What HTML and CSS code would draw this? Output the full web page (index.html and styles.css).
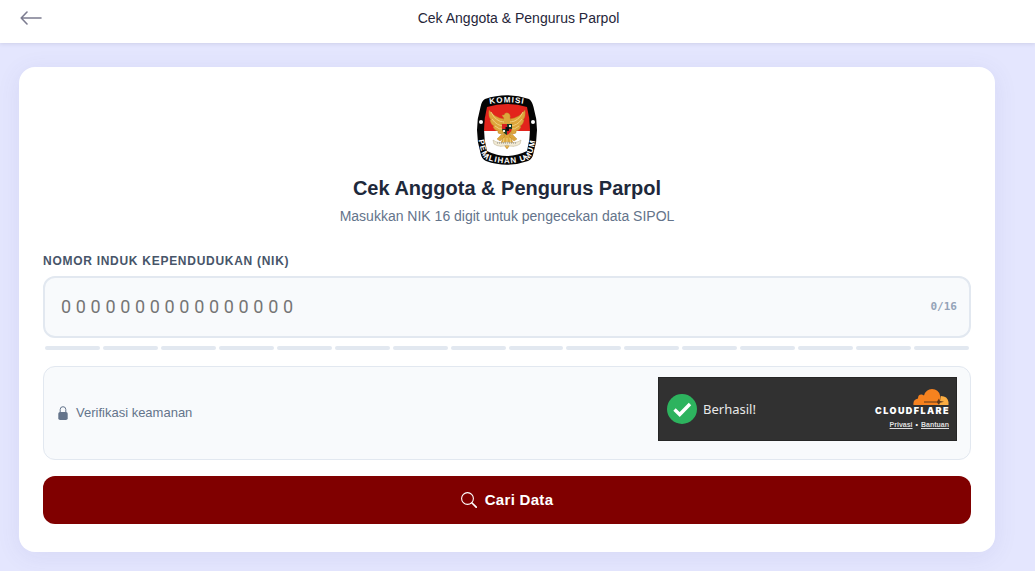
FILE: index.html
```html
<!DOCTYPE html>
<html lang="id">
<head>
<meta charset="utf-8">
<meta name="viewport" content="width=device-width, initial-scale=1">
<title>Cek Anggota &amp; Pengurus Parpol</title>
<link rel="stylesheet" href="styles.css">
</head>
<body>
<header class="topbar">
  <a class="back" href="#" aria-label="Kembali">
    <svg width="22" height="14" viewBox="0 0 22 14" fill="none" stroke="currentColor" stroke-width="1.6" stroke-linecap="round" stroke-linejoin="round"><path d="M21 7H1.2M7 1 1.2 7 7 13"/></svg>
  </a>
  <div class="topbar-title">Cek Anggota &amp; Pengurus Parpol</div>
</header>
<main class="page">
  <form class="card">
    <div class="intro">
      <svg class="emblem" width="62" height="70" viewBox="0 0 62 70" role="img" aria-label="Komisi Pemilihan Umum">
        <defs>
          <path id="arcTop" d="M6 11Q31 4 56 11"/>
          <path id="arcBottom" d="M1.500 37Q2.500 50 6.500 60Q8 64 12 65Q31 71.500 50 65Q54 64 55.500 60Q59.500 50 60.500 37"/>
          <clipPath id="field"><path d="M11 12Q31 6 51 12Q57 35 51 56Q31 66 11 56Q5 35 11 12Z"/></clipPath>
        </defs>
        <path d="M9 4Q31-3.500 53 4Q56 6 57.500 12Q64.500 35 57.500 58Q56.500 64 52 66Q31 73.500 10 66Q5.500 64 4.500 58Q-2.500 35 4.500 12Q5.500 6 9 4Z" fill="#050505"/>
        <g clip-path="url(#field)"><path d="M0 0H62V36H0Z" fill="#e3241c"/><path d="M0 36H62V70H0Z" fill="#fff"/></g>
        <g fill="#dda63c" stroke="#b98124" stroke-width=".4">
          <path d="M28 24Q19 23 13 15Q12 22 15 25L14 25Q15 30 18 31L17 32Q19 36 22 36L22 38Q25 40 28 38Z"/>
          <path d="M34 24Q43 23 49 15Q50 22 47 25L48 25Q47 30 44 31L45 32Q43 36 40 36L40 38Q37 40 34 38Z"/>
          <path d="M27 22L26 20L28 20Q29 17 32 18Q35 19 34 23Q37 27 36 34L34 41H28L26 34Q25 27 28 23Z"/>
          <path d="M28 39H34L38 51L34 50L31 54L28 50L24 51Z"/>
          <path d="M26 39L21 44L24 46L29 41ZM36 39L41 44L38 46L33 41Z"/>
        </g>
        <path d="M15 17Q20 27 28 27M16 24Q21 31 28 31M19 31Q23 35 28 34M47 17Q42 27 34 27M46 24Q41 31 34 31M43 31Q39 35 34 34M31 43V52M28 43L27 50M34 43L35 50" fill="none" stroke="#f6d889" stroke-width=".8"/>
        <path d="M26 29H31V34H26ZM31 34H36Q35 38 31 40Z" fill="#d92020"/>
        <path d="M31 29H36V34H31ZM26 34H31V40Q27 38 26 34Z" fill="#183d27"/>
        <path d="M29.500 32H33V36H29.500Z" fill="#111"/><path d="M33 30H35V32H33ZM27 35H29V37H27Z" fill="#f4efe0"/>
        <path d="M17 45Q22 49 31 47Q40 49 45 45L44 49Q38 53 31 50Q24 53 18 49Z" fill="#f2ead4" stroke="#b9ae91" stroke-width=".5"/>
        <path d="M21 48L41 48" stroke="#777" stroke-width=".8" stroke-dasharray="1 1"/>
        <circle cx="5" cy="27" r="2" fill="#fff"/><circle cx="57" cy="27" r="2" fill="#fff"/>
        <text class="emblem-top"><textPath href="#arcTop" startOffset="50%" text-anchor="middle">KOMISI</textPath></text>
        <text class="emblem-bottom"><textPath href="#arcBottom" startOffset="50%" text-anchor="middle">PEMILIHAN UMUM</textPath></text>
      </svg>
      <h1 class="title">Cek Anggota &amp; Pengurus Parpol</h1>
      <p class="subtitle">Masukkan NIK 16 digit untuk pengecekan data SIPOL</p>
    </div>
    <label class="label" for="nik">NOMOR INDUK KEPENDUDUKAN (NIK)</label>
    <div class="field">
      <input class="nik" id="nik" type="text" inputmode="numeric" maxlength="16" placeholder="0000000000000000">
      <span class="count">0/16</span>
    </div>
    <div class="segments">
      <i class="segment"></i><i class="segment"></i><i class="segment"></i><i class="segment"></i>
      <i class="segment"></i><i class="segment"></i><i class="segment"></i><i class="segment"></i>
      <i class="segment"></i><i class="segment"></i><i class="segment"></i><i class="segment"></i>
      <i class="segment"></i><i class="segment"></i><i class="segment"></i><i class="segment"></i>
    </div>
    <section class="verify">
      <div class="verify-label">
        <svg width="10" height="14" viewBox="0 0 10 14"><path d="M2.200 7V3.500a2.800 2.800 0 0 1 5.600 0V7" fill="none" stroke="#64748b" stroke-width="1"/><rect x=".3" y="6" width="9.400" height="8" rx="1.800" fill="#64748b"/></svg>
        <span>Verifikasi keamanan</span>
      </div>
      <div class="turnstile">
        <svg width="30" height="30" viewBox="0 0 30 30"><circle cx="15" cy="15" r="15" fill="#2db35e"/><path d="M7.500 15.500 12.700 20.500 23 10" fill="none" stroke="#fff" stroke-width="3.400"/></svg>
        <span class="success">Berhasil!</span>
        <div class="brand">
          <svg width="36" height="17" viewBox="0 0 36 17">
            <path d="M26 16H.5Q-.3 10.500 5 9.500Q5 5 9 5.500L11 6.500Q13 0 19 0Q25.500 0 27 6.500Q28 8 27 12Z" fill="#f6821f"/>
            <path d="M28 7Q34.500 7 35.500 13V16H25L27 12Z" fill="#fbad41"/>
            <path d="M11 12.500H24L26 9.500L27 12L31 12.700L27 13.700L26 16L24 13.500H11Z" fill="#5b371c"/>
          </svg>
          <span class="wordmark">CLOUDFLARE</span>
          <div class="links"><a href="#">Privasi</a><span>•</span><a href="#">Bantuan</a></div>
        </div>
      </div>
    </section>
    <button class="submit" type="button">
      <svg width="16" height="16" viewBox="0 0 16 16" fill="none" stroke="currentColor" stroke-width="1.100" stroke-linecap="round"><circle cx="6.500" cy="6.500" r="5.900"/><path d="m11 11 4.200 4.200" stroke-width="1.700"/></svg>
      <span>Cari Data</span>
    </button>
  </form>
</main>
</body>
</html>
```
FILE: styles.css
```css
* { box-sizing: border-box; }
body {
  margin: 0;
  min-height: 100vh;
  background: #e4e6fe;
  font-family: "Liberation Sans", Arial, sans-serif;
}
.topbar {
  position: relative;
  display: grid;
  grid-template-columns: 40px 1fr 40px;
  align-items: center;
  height: 43px;
  padding: 0 18px 8px 20px;
  background: #fff;
  box-shadow: 0 1px 4px rgba(50, 50, 80, .12);
}
.back { display: flex; color: #7c7c90; }
.topbar-title { text-align: center; font-size: 14px; line-height: 20px; color: #26263a; }
.page { padding: 24px 40px 19px 19px; }
.card {
  padding: 28px 24px;
  border-radius: 16px;
  background: #fff;
  box-shadow: 0 4px 24px rgba(80, 80, 160, .09);
}
.intro { display: flex; flex-direction: column; align-items: center; }
.emblem { display: block; }
.emblem text { fill: #fff; font-weight: 700; }
.emblem-top { font-size: 8px; letter-spacing: 1px; }
.emblem-bottom { font-size: 8px; letter-spacing: 1px; }
.title { margin: 11px 0 0; font-size: 20px; line-height: 24px; color: #1e293b; }
.subtitle { margin: 6px 0 0; font-size: 14px; line-height: 20px; color: #64748b; }
.label {
  display: block;
  margin-top: 27px;
  font-size: 12px;
  line-height: 16px;
  font-weight: 700;
  letter-spacing: .06em;
  color: #475569;
}
.field {
  display: flex;
  align-items: center;
  height: 62px;
  margin-top: 7px;
  padding: 0 12px 0 16px;
  border: 2px solid #e2e8f0;
  border-radius: 12px;
  background: #f8fafc;
}
.nik {
  flex: 1;
  min-width: 0;
  padding: 0;
  border: 0;
  outline: 0;
  background: transparent;
  font-family: Roboto, sans-serif;
  font-size: 18px;
  line-height: 24px;
  letter-spacing: .26em;
  color: #1e293b;
}
.nik::placeholder { color: #757575; opacity: 1; }
.count { font: 700 11px/16px "DejaVu Sans Mono", monospace; color: #94a3b8; }
.segments { display: flex; gap: 3px; margin-top: 8px; padding: 0 2px; }
.segment { flex: 1; height: 4px; border-radius: 2px; background: #e2e8f0; }
.verify {
  display: flex;
  align-items: center;
  justify-content: space-between;
  height: 94px;
  margin-top: 16px;
  padding: 0 13px 0 14px;
  border: 1px solid #e2e8f0;
  border-radius: 12px;
  background: #f8fafc;
}
.verify-label { display: flex; align-items: center; gap: 8px; font-size: 13px; line-height: 16px; color: #64748b; }
.turnstile {
  display: flex;
  align-items: center;
  width: 299px;
  height: 64px;
  margin-bottom: 8px;
  padding: 0 7px 0 8px;
  border: 1px solid #262626;
  background: #313131;
  color: #fff;
}
.success { margin-left: 6px; font-family: "Noto Sans", sans-serif; font-size: 13px; line-height: 20px; color: #e8e8e8; }
.brand { display: flex; flex-direction: column; align-items: flex-end; margin-left: auto; }
.wordmark { font: 900 9px/10px Inter, sans-serif; letter-spacing: .16em; margin-right: -1px; }
.links { display: flex; gap: 3px; margin-top: 4px; font-size: 7px; line-height: 10px; font-weight: 700; }
.links a { color: #dedede; }
.submit {
  display: flex;
  align-items: center;
  justify-content: center;
  gap: 8px;
  width: 100%;
  height: 48px;
  margin-top: 16px;
  border: 0;
  border-radius: 12px;
  background: #800000;
  color: #fff;
  font: 700 15px/20px "Liberation Sans", Arial, sans-serif;
  letter-spacing: .02em;
}
```
